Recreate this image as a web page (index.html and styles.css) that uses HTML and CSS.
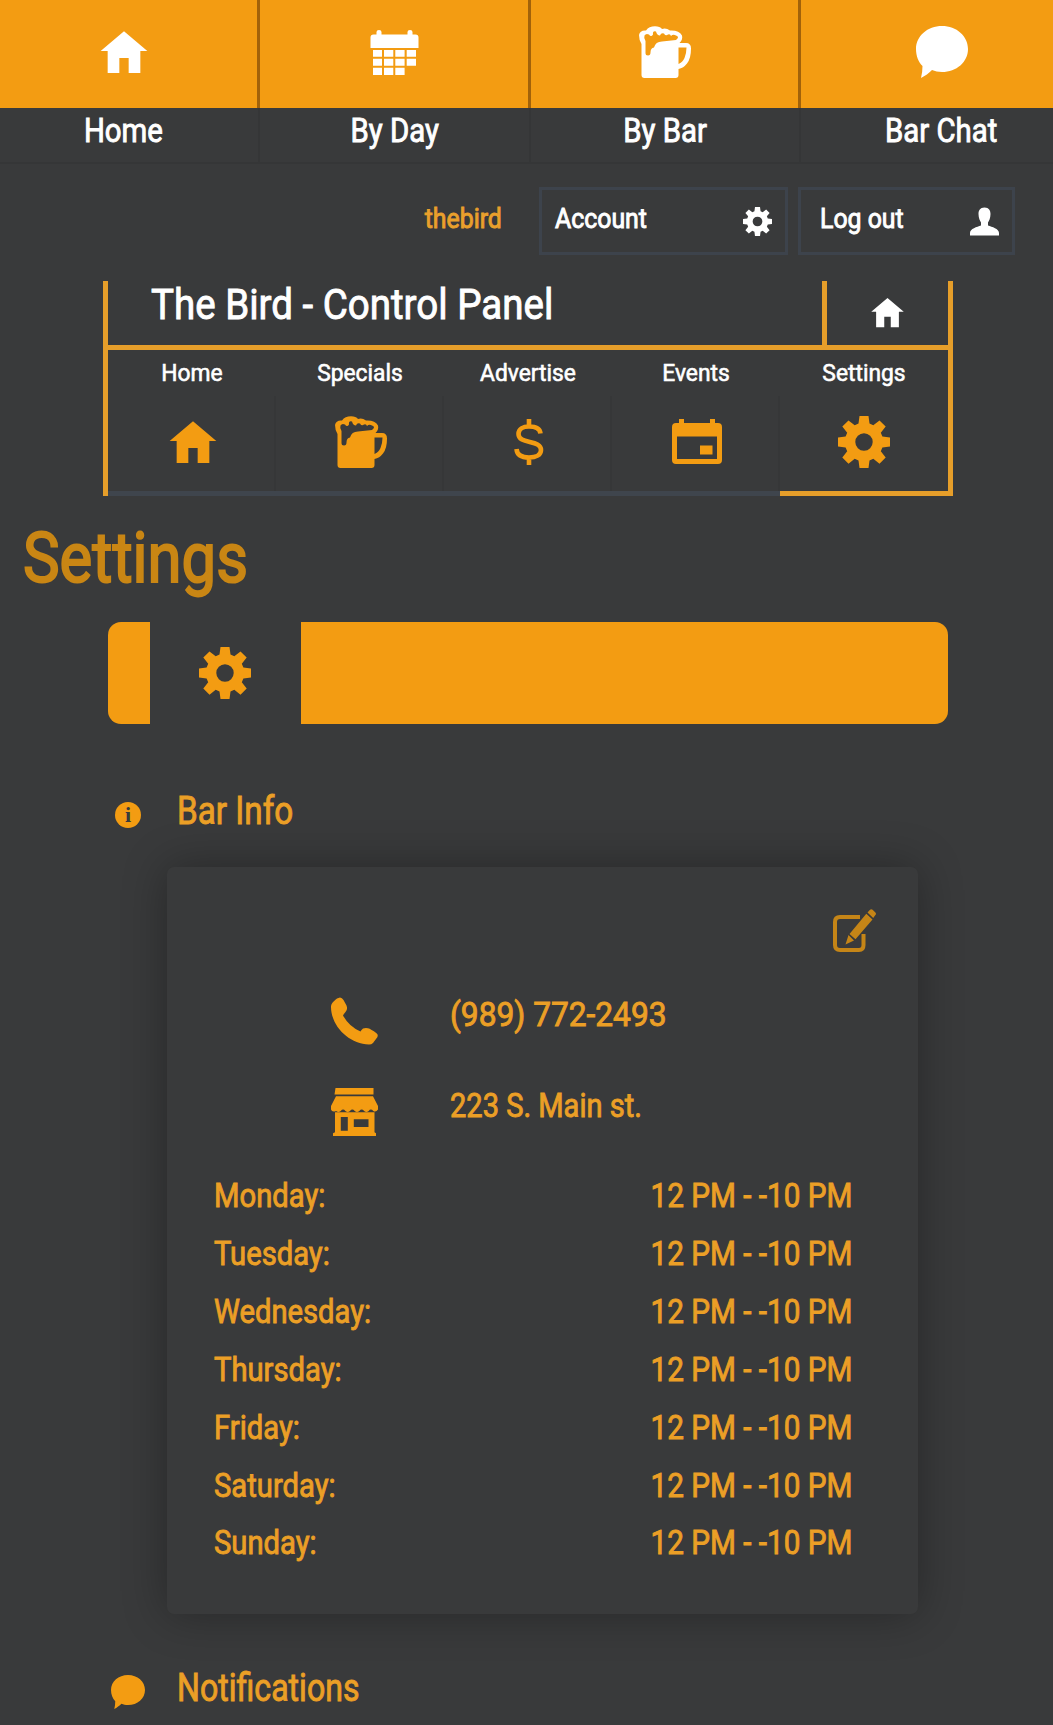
FILE: index.html
```
<!DOCTYPE html>
<html lang="en">
<head>
  <meta charset="UTF-8">
  <meta name="viewport" content="width=device-width, initial-scale=1.0">
  <title>The Bird - Control Panel</title>
  <link rel="stylesheet" href="styles.css">
</head>
<body>
  <!-- icon sprite -->
  <svg class="sprite" aria-hidden="true">
    <symbol id="i-house" viewBox="0 -0.5 24 24">
      <path d="M10 20.5v-6.400h4v6.400h5v-9.400h3L12 2.600 2 11.100h3v9.400z"/>
    </symbol>
    <symbol id="i-gear" viewBox="0 0 52 52">
      <path fill-rule="evenodd" d="M21.5 0h9l1 7.6 3.8 1.6 6.2-4.8 6.2 6.2-4.9 6.1 1.6 3.9 7.6.9v9l-7.6 1-1.6 3.8 4.9 6.2-6.2 6.2-6.2-4.9-3.8 1.6-1 7.6h-9l-1-7.6-3.8-1.6-6.2 4.9-6.2-6.2 4.9-6.2-1.6-3.8-7.6-1v-9l7.6-.9 1.6-3.9-4.9-6.1 6.2-6.2 6.2 4.8 3.8-1.6zM26 17.3a8.7 8.7 0 1 0 0 17.4 8.7 8.7 0 1 0 0-17.4z"/>
    </symbol>
    <symbol id="i-beer" viewBox="0 0 52 52">
      <path fill-rule="evenodd" d="M0 9Q1 4 7 4.500 10 .3 16 .3q5 0 7 2.700 4-1.500 8 1.500 9-.5 12 5 1 4-2.500 7.500H47q5 0 5 5.500 0 10-4 15-3.500 4.500-8.500 5.500v6q0 3-3 3h-31q-3 0-3-3V18Q0 14 0 9zM5.500 9.500q-1 3 1 5.500v12q0 2.500 2.500 2.500t2.500-3Q11.500 22 15 21.500 16.500 15.500 23 15.500L37 14q4-3 0-4.500-3-1.500-5 .5-1-3-4-1-2 1-3-1.500-3-1-4 2-3 0-4-4-3.500-1-3 3-2 3-4 0-3-1.500-4.500 1zM39.500 21.500V38q4-1.500 6-6 2-5 2-10.500z"/>
    </symbol>
    <symbol id="i-chat" viewBox="0 0 52 52">
      <path d="M26 0c14.500 0 26 10 26 23S40.500 46 26 46c-4 0-7-.8-10-2-3 3-7 6-11 8 1-4 1.500-8 1.500-12C2.500 36 0 30 0 23 0 10 11.500 0 26 0z"/>
    </symbol>
    <symbol id="i-days" viewBox="0 0 48 45">
      <path d="M3 4.500h3V2q0-2 2.500-2T11 2v2.500h26V2q0-2 2.500-2T42 2v2.500h3q3 0 3 3V18H0V7.500q0-3 3-3z"/>
      <path d="M2.500 20h9v6.700h-9zM13.500 20h9.300v6.700h-9.300zM24.800 20h9.300v6.700h-9.300zM36.200 20h9.300v6.700h-9.300zM2.500 28.700h9v7h-9zM13.500 28.700h9.300v7h-9.300zM24.800 28.700h9.300v7h-9.300zM36.200 28.700h9.300v7h-9.300zM2.500 37.700h9V45h-9zM13.500 37.700h9.300V45h-9.300zM24.800 37.700h9.300V45h-9.300z"/>
    </symbol>
    <symbol id="i-dollar" viewBox="0 0 30 46">
      <path fill="none" stroke="currentColor" stroke-width="4.600" d="M26.500 14.500C26 9.500 21 7.500 15 7.500S4.500 10 4.500 15c0 11 22.500 5 22.500 16 0 5-5 7.500-12 7.500S3 36 2.500 30M15 0v8M15 38v8"/>
    </symbol>
    <symbol id="i-event" viewBox="0 0 50 45">
      <path fill-rule="evenodd" d="M4 4h3V0h5v4h26V0h5v4h3q4 0 4 4v33q0 4-4 4H4q-4 0-4-4V8q0-4 4-4zM5 17.500v22.500h40V17.500zM28 26.500h12.500v9H28z"/>
    </symbol>
    <symbol id="i-user" viewBox="0 0 29 28">
      <path d="M14.500 0c4.500 0 6 3 6 6.500 0 4-1.500 7-2.500 8.500v3c4 1.500 11 3 11 7.500V28H0v-2.500C0 21 7 19.500 11 18v-3c-1-1.500-2.500-4.500-2.500-8.500 0-3.500 1.500-6.500 6-6.500z"/>
    </symbol>
    <symbol id="i-edit" viewBox="0 0 43 43">
      <path fill="none" stroke="currentColor" stroke-width="4" d="M27 8H7Q2 8 2 13v23q0 5 5 5h19q4.500 0 4.500-5V25"/>
      <path d="M12.500 35.500l3-9.500 5.500 5.500zM16.500 25L33.300 4.800l6.200 5.700L22.500 30.300zM34.500 3.500L37 .8q1.300-1.300 2.600 0l2.800 2.700q1.200 1.300 0 2.600l-2.200 2.900z"/>
    </symbol>
    <symbol id="i-phone" viewBox="0 0 47 47">
      <path d="M9 0q2 0 3.500 2.500L15.500 8q1.500 4-1 6.500-2 2-2.500 3.500 6 11 17.500 16 .8-1.500 2.500-3 2.500-1 5-.3 3 .8 8.500 5 2 1.500.8 4L42 45.500Q40.500 47 38 47C18 46.500.5 29 0 10 0 6.500 1.500 4.500 6 1z"/>
    </symbol>
    <symbol id="i-store" viewBox="0 0 47 48">
      <path d="M4.500 0h38v6.500h-39zM5 8.300h37l5 9.700v3.500q-2 3-4.700 1.500-2.600-2.800-4.600 0-2.300 2-4.600 0-2.400-2.800-4.800 0-2.300 2-4.600 0-2.400-2.800-4.700 0-2.300 2-4.600 0-2.400-2.800-4.600 0-2.400 2-4.700 0Q1 24.500 0 21.500V18z"/>
      <path fill-rule="evenodd" d="M4 24.200h39.500v20.100l1.500 1v2.700H2v-2.700l2-1zM9.800 29v13.800h7V29zM22.800 31.200v7.800h14.700v-7.800z"/>
    </symbol>
  </svg>

  <nav class="main-nav">
    <a class="main-nav-item">
      <span class="main-nav-icon"><svg class="icon house"><use href="#i-house"/></svg></span>
      <span class="main-nav-label"><span class="narrow">Home</span></span>
    </a>
    <a class="main-nav-item">
      <span class="main-nav-icon"><svg class="icon days"><use href="#i-days"/></svg></span>
      <span class="main-nav-label"><span class="narrow">By Day</span></span>
    </a>
    <a class="main-nav-item">
      <span class="main-nav-icon"><svg class="icon"><use href="#i-beer"/></svg></span>
      <span class="main-nav-label"><span class="narrow">By Bar</span></span>
    </a>
    <a class="main-nav-item">
      <span class="main-nav-icon"><svg class="icon"><use href="#i-chat"/></svg></span>
      <span class="main-nav-label"><span class="narrow">Bar Chat</span></span>
    </a>
  </nav>

  <div class="account-bar">
    <span class="username">thebird</span>
    <a class="account-btn account">
      <span class="account-text">Account</span>
      <svg class="icon small"><use href="#i-gear"/></svg>
    </a>
    <a class="account-btn logout">
      <span class="account-text">Log out</span>
      <svg class="icon small"><use href="#i-user"/></svg>
    </a>
  </div>

  <div class="panel">
    <div class="panel-head">
      <div class="panel-title"><span class="title-text">The Bird - Control Panel</span></div>
      <a class="panel-home"><svg class="icon house-small"><use href="#i-house"/></svg></a>
    </div>
    <div class="tabs">
      <a class="tab">
        <span class="tab-label">Home</span>
        <span class="tab-icon"><svg class="icon house"><use href="#i-house"/></svg></span>
      </a>
      <a class="tab">
        <span class="tab-label">Specials</span>
        <span class="tab-icon"><svg class="icon"><use href="#i-beer"/></svg></span>
      </a>
      <a class="tab">
        <span class="tab-label">Advertise</span>
        <span class="tab-icon"><svg class="icon dollar"><use href="#i-dollar"/></svg></span>
      </a>
      <a class="tab">
        <span class="tab-label">Events</span>
        <span class="tab-icon"><svg class="icon event"><use href="#i-event"/></svg></span>
      </a>
      <a class="tab active">
        <span class="tab-label">Settings</span>
        <span class="tab-icon"><svg class="icon"><use href="#i-gear"/></svg></span>
      </a>
    </div>
  </div>

  <h1>Settings</h1>

  <div class="banner">
    <div class="banner-icon"><svg class="icon"><use href="#i-gear"/></svg></div>
  </div>

  <h2 class="section-title bar-info">
    <span class="section-icon"><span class="info">i</span></span>
    <span class="section-text">Bar Info</span>
  </h2>

  <div class="card">
    <a class="edit"><svg class="icon edit-icon"><use href="#i-edit"/></svg></a>
    <div class="contact">
      <svg class="icon contact-icon"><use href="#i-phone"/></svg>
      <span class="contact-text phone">(989) 772-2493</span>
    </div>
    <div class="contact address">
      <svg class="icon contact-icon"><use href="#i-store"/></svg>
      <span class="contact-text">223 S. Main st.</span>
    </div>
    <div class="hours">
      <div class="hours-row"><span class="day">Monday:</span><span class="time">12 PM - -10 PM</span></div>
      <div class="hours-row"><span class="day">Tuesday:</span><span class="time">12 PM - -10 PM</span></div>
      <div class="hours-row"><span class="day">Wednesday:</span><span class="time">12 PM - -10 PM</span></div>
      <div class="hours-row"><span class="day">Thursday:</span><span class="time">12 PM - -10 PM</span></div>
      <div class="hours-row"><span class="day">Friday:</span><span class="time">12 PM - -10 PM</span></div>
      <div class="hours-row"><span class="day">Saturday:</span><span class="time">12 PM - -10 PM</span></div>
      <div class="hours-row"><span class="day">Sunday:</span><span class="time">12 PM - -10 PM</span></div>
    </div>
  </div>

  <h2 class="section-title notifications">
    <span class="section-icon"><svg class="icon chat-small"><use href="#i-chat"/></svg></span>
    <span class="section-text">Notifications</span>
  </h2>
</body>
</html>
```
FILE: styles.css
```
* {
  box-sizing: border-box;
}

body {
  margin: 0;
  height: 1725px;
  overflow: hidden;
  background: #393a3b;
  color: #fff;
  font-family: Roboto, "Liberation Sans", sans-serif;
  -webkit-text-stroke: 0.9px currentColor;
}

h1,
h2 {
  margin: 0;
  font-weight: 400;
}

.sprite {
  display: none;
}

.icon {
  display: block;
  width: 52px;
  height: 52px;
  fill: currentColor;
  flex: none;
}

.icon.house {
  width: 56px;
  height: 56px;
}

.icon.days {
  width: 49px;
  height: 45px;
}

.icon.small {
  width: 29px;
  height: 29px;
}

/* main navigation */
.main-nav {
  display: grid;
  grid-template-columns: 270.5px 270.5px 270.5px 282px;
  width: 1093.5px;
  margin-left: -10.5px;
}

.main-nav-item {
  display: flex;
  flex-direction: column;
  border-bottom: 2px solid #353637;
}

.main-nav-icon {
  display: flex;
  align-items: center;
  justify-content: center;
  height: 108px;
  padding: 0 0 4px 2px;
  background: #f39c12;
  border-right: 3px solid #a1620a;
}

.main-nav-label {
  height: 54px;
  border-right: 2px solid #353637;
  font-size: 33px;
  line-height: 46px;
  text-align: center;
}

.narrow {
  display: inline-block;
  transform: scaleX(0.89);
}

/* account bar */
.account-bar {
  display: flex;
  justify-content: flex-end;
  gap: 10px;
  margin-top: 23px;
  padding-right: 38px;
  font-size: 27px;
  line-height: 58px;
}

.username {
  margin-right: 27px;
  padding-top: 3px;
  color: #e9a02c;
  transform: scaleX(0.92);
  transform-origin: right;
}

.account-btn {
  display: flex;
  justify-content: space-between;
  height: 68px;
  padding: 0 13px;
  border: 3px solid #3d434c;
}

.account-btn .icon {
  align-self: center;
}

.account-text {
  transform: scaleX(0.92);
  transform-origin: left;
}

.account {
  width: 249px;
}

.logout {
  width: 217px;
  padding-left: 19px;
}

/* control panel */
.panel {
  width: 850px;
  margin: 26px 0 0 103px;
  border: solid #e69e2a;
  border-width: 0 5px;
}

.panel-head {
  display: flex;
  height: 69px;
  border-bottom: 5px solid #e69e2a;
}

.panel-title {
  flex: 1;
  padding-left: 43px;
  font-size: 42px;
  line-height: 48px;
}

.title-text {
  display: inline-block;
  transform: scaleX(0.917);
  transform-origin: left;
}

.panel-home {
  width: 126px;
  padding: 12px 0 0 41px;
  border-left: 5px solid #e69e2a;
}

.icon.house-small {
  width: 39px;
  height: 39px;
}

.tabs {
  display: grid;
  grid-template-columns: repeat(5, 1fr);
  height: 146px;
}

.tab {
  display: flex;
  flex-direction: column;
  border-bottom: 5px solid #3f454d;
}

.tab.active {
  border-color: #e69e2a;
}

.tab-label {
  font-size: 24px;
  line-height: 46px;
  text-align: center;
  transform: scaleX(0.95);
  -webkit-text-stroke-width: 0.6px;
}

.tab-icon {
  display: flex;
  flex: 1;
  align-items: center;
  justify-content: center;
  padding: 0 0 4px 3px;
  border-right: 2px solid #363738;
  color: #f39c12;
}

.tab.active .tab-icon {
  padding-left: 0;
  border-right: 0;
}

.icon.dollar {
  width: 30px;
  height: 46px;
}

.icon.event {
  width: 50px;
  height: 45px;
}

/* settings */
h1 {
  margin: 22px 0 0 23px;
  color: #c98614;
  font-size: 70px;
  line-height: 80px;
  transform: scaleX(0.88);
  transform-origin: left;
  -webkit-text-stroke-width: 2px;
}

.banner {
  width: 840px;
  height: 102px;
  margin: 24px 0 0 108px;
  border-radius: 13px;
  background: #f39c12;
}

.banner-icon {
  display: flex;
  align-items: center;
  justify-content: center;
  width: 151px;
  height: 102px;
  margin-left: 42px;
  padding-right: 1px;
  background: #393a3b;
  color: #f39c12;
}

.section-title {
  display: flex;
  margin-left: 108px;
  color: #eb9f26;
  font-size: 38px;
  line-height: 46px;
}

.section-icon {
  display: flex;
  align-items: center;
  justify-content: center;
  width: 40px;
  height: 54px;
  margin-right: 29px;
  color: #f39c12;
}

.section-text {
  transform: scaleX(0.875);
  transform-origin: left;
}

.bar-info {
  height: 46px;
  margin-top: 64px;
}

.info {
  width: 26px;
  height: 26px;
  border-radius: 50%;
  background: #f39c12;
  color: #393a3b;
  font: bold 22px/26px "Liberation Serif", serif;
  text-align: center;
  -webkit-text-stroke-width: 0;
}

.notifications {
  margin-top: 51px;
}

.notifications .section-text {
  transform: scaleX(0.845);
}

.icon.chat-small {
  width: 34px;
  height: 34px;
}

/* bar info card */
.card {
  width: 751px;
  height: 747px;
  margin: 33px 0 0 167px;
  padding-top: 42px;
  border-radius: 7px;
  background: #393a3b;
  box-shadow: 0 0 45px rgba(0, 0, 0, 0.32);
  color: #eb9f26;
  font-size: 33px;
}

.edit {
  display: flex;
  justify-content: flex-end;
  height: 82px;
  padding-right: 42px;
  color: #c58517;
}

.icon.edit-icon {
  width: 43px;
  height: 43px;
}

.contact {
  display: flex;
  height: 91px;
  padding-left: 164px;
  line-height: 48px;
}

.contact.address {
  height: 84px;
}

.icon.contact-icon {
  width: 47px;
  height: 48px;
  margin: 6px 72px 0 0;
  color: #f39c12;
}

.contact-text {
  transform: scaleX(0.88);
  transform-origin: left;
}

.contact-text.phone {
  transform: scaleX(0.96);
}

.hours {
  padding: 1px 66px 0 47px;
}

.hours-row {
  display: flex;
  justify-content: space-between;
  line-height: 57.9px;
}

.day {
  transform: scaleX(0.885);
  transform-origin: left;
}

.time {
  transform: scaleX(0.9);
  transform-origin: right;
}
```
